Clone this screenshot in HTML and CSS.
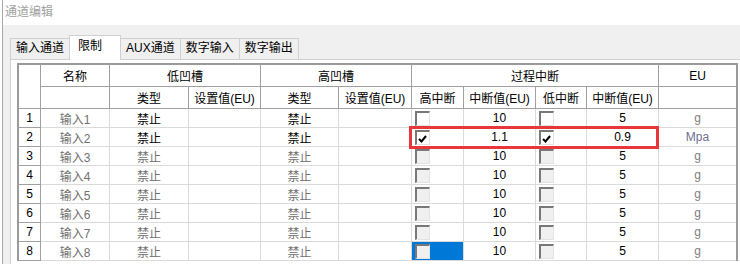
FILE: index.html
```html
<!DOCTYPE html>
<html lang="zh-CN">
<head>
  <meta charset="UTF-8">
  <meta name="viewport" content="width=device-width, initial-scale=1.0">
  <title>通道编辑</title>
  <link rel="stylesheet" href="styles.css">
</head>
<body>
  <div class="window">
    <div class="title">通道编辑</div>
    <div class="client">
      <div class="tabs">
        <div class="tab">输入通道</div>
        <div class="tab active">限制</div>
        <div class="tab">AUX通道</div>
        <div class="tab">数字输入</div>
        <div class="tab">数字输出</div>
      </div>
      <div class="panel">
        <div class="grid">
          <!-- header -->
          <div class="hd corner"></div>
          <div class="hd">名称</div>
          <div class="hd span2">低凹槽</div>
          <div class="hd span2">高凹槽</div>
          <div class="hd span4">过程中断</div>
          <div class="hd last">EU</div>
          <div class="hd"></div>
          <div class="hd">类型</div>
          <div class="hd">设置值(EU)</div>
          <div class="hd">类型</div>
          <div class="hd">设置值(EU)</div>
          <div class="hd">高中断</div>
          <div class="hd">中断值(EU)</div>
          <div class="hd">低中断</div>
          <div class="hd">中断值(EU)</div>
          <div class="hd last"></div>

          <!-- rows -->
          <div class="row">
            <div class="num">1</div>
            <div class="cell name">输入1</div>
            <div class="cell type">禁止</div>
            <div class="cell"></div>
            <div class="cell type">禁止</div>
            <div class="cell"></div>
            <div class="cell chk-cell"><span class="chk"></span></div>
            <div class="cell">10</div>
            <div class="cell chk-cell"><span class="chk"></span></div>
            <div class="cell">5</div>
            <div class="cell eu">g</div>
          </div>
          <div class="row">
            <div class="num">2</div>
            <div class="cell name">输入2</div>
            <div class="cell type">禁止</div>
            <div class="cell"></div>
            <div class="cell type">禁止</div>
            <div class="cell"></div>
            <div class="cell chk-cell"><span class="chk"><svg viewBox="0 0 9 8" width="9" height="8"><path d="M1 4 L3.5 6.5 L8 1"/></svg></span></div>
            <div class="cell">1.1</div>
            <div class="cell chk-cell"><span class="chk"><svg viewBox="0 0 9 8" width="9" height="8"><path d="M1 4 L3.5 6.5 L8 1"/></svg></span></div>
            <div class="cell">0.9</div>
            <div class="cell eu mpa">Mpa</div>
          </div>
          <div class="row off">
            <div class="num">3</div>
            <div class="cell name">输入3</div>
            <div class="cell type">禁止</div>
            <div class="cell"></div>
            <div class="cell type">禁止</div>
            <div class="cell"></div>
            <div class="cell chk-cell"><span class="chk"></span></div>
            <div class="cell">10</div>
            <div class="cell chk-cell"><span class="chk"></span></div>
            <div class="cell">5</div>
            <div class="cell eu">g</div>
          </div>
          <div class="row off">
            <div class="num">4</div>
            <div class="cell name">输入4</div>
            <div class="cell type">禁止</div>
            <div class="cell"></div>
            <div class="cell type">禁止</div>
            <div class="cell"></div>
            <div class="cell chk-cell"><span class="chk"></span></div>
            <div class="cell">10</div>
            <div class="cell chk-cell"><span class="chk"></span></div>
            <div class="cell">5</div>
            <div class="cell eu">g</div>
          </div>
          <div class="row off">
            <div class="num">5</div>
            <div class="cell name">输入5</div>
            <div class="cell type">禁止</div>
            <div class="cell"></div>
            <div class="cell type">禁止</div>
            <div class="cell"></div>
            <div class="cell chk-cell"><span class="chk"></span></div>
            <div class="cell">10</div>
            <div class="cell chk-cell"><span class="chk"></span></div>
            <div class="cell">5</div>
            <div class="cell eu">g</div>
          </div>
          <div class="row off">
            <div class="num">6</div>
            <div class="cell name">输入6</div>
            <div class="cell type">禁止</div>
            <div class="cell"></div>
            <div class="cell type">禁止</div>
            <div class="cell"></div>
            <div class="cell chk-cell"><span class="chk"></span></div>
            <div class="cell">10</div>
            <div class="cell chk-cell"><span class="chk"></span></div>
            <div class="cell">5</div>
            <div class="cell eu">g</div>
          </div>
          <div class="row off">
            <div class="num">7</div>
            <div class="cell name">输入7</div>
            <div class="cell type">禁止</div>
            <div class="cell"></div>
            <div class="cell type">禁止</div>
            <div class="cell"></div>
            <div class="cell chk-cell"><span class="chk"></span></div>
            <div class="cell">10</div>
            <div class="cell chk-cell"><span class="chk"></span></div>
            <div class="cell">5</div>
            <div class="cell eu">g</div>
          </div>
          <div class="row off">
            <div class="num">8</div>
            <div class="cell name">输入8</div>
            <div class="cell type">禁止</div>
            <div class="cell"></div>
            <div class="cell type">禁止</div>
            <div class="cell"></div>
            <div class="cell chk-cell sel"><span class="chk"></span></div>
            <div class="cell">10</div>
            <div class="cell chk-cell"><span class="chk"></span></div>
            <div class="cell">5</div>
            <div class="cell eu">g</div>
          </div>

          <div class="mark"></div>
        </div>
      </div>
    </div>
  </div>
</body>
</html>
```

FILE: styles.css
```css
* {
  box-sizing: border-box;
}
body {
  margin: 0;
  background: #fff;
  font-family: "Liberation Sans", "Noto Sans CJK SC", sans-serif;
  font-size: 12px;
  color: #000;
}
.window {
  height: 264px;
  margin-left: 2px;
  border-left: 1px solid #a9a9a9;
  overflow: hidden;
}
.title {
  height: 25px;
  line-height: 25px;
  padding-left: 2px;
  color: #a0a0a0;
  background: #fff;
}
.client {
  height: 239px;
  background: #f0f0f0;
  padding: 10px 0 0 7px;
}
.tabs {
  display: flex;
  align-items: flex-end;
  height: 24px;
}
.tab {
  height: 21px;
  line-height: 18px;
  padding: 0 5px;
  margin-left: -1px;
  border: 1px solid #d0d0d0;
  border-bottom: none;
  background: #f0f0f0;
  white-space: nowrap;
  text-align: center;
}
.tab:first-child {
  margin-left: 0;
}
.tab.active {
  position: relative;
  z-index: 1;
  height: 25px;
  margin-bottom: -1px;
  line-height: 21px;
  padding: 0 18px 0 8px;
  background: #fff;
}
.panel {
  width: 800px;
  height: 300px;
  border: 1px solid #d0d0d0;
  background: #fff;
  padding: 3px 0 0 6px;
}
.grid {
  position: relative;
  display: grid;
  width: 721px;
  grid-template-columns: 22px 69px 79px 72px 78px 73px 52px 72px 51px 72px 77px;
  grid-template-rows: 22px 22px repeat(8, 19px);
  border: 2px solid #9a9a9a;
  border-bottom: none;
}
.hd,
.num,
.cell {
  display: flex;
  align-items: center;
  justify-content: center;
  white-space: nowrap;
  border-right: 1px solid #a0a0a0;
  border-bottom: 1px solid #a0a0a0;
}
.hd.last,
.cell.eu {
  border-right: none;
}
.corner {
  grid-row: span 2;
}
.span2 {
  grid-column: span 2;
}
.span4 {
  grid-column: span 4;
}
.row {
  display: contents;
}
.cell {
  border-color: #dadada;
}
.name {
  color: #707070;
}
.off .type {
  color: #707070;
}
.eu {
  color: #808080;
}
.mpa {
  color: #6e6e92;
}
.chk-cell {
  justify-content: flex-start;
  padding-left: 3px;
}
.sel {
  background: #0078d7;
}
.chk {
  display: block;
  width: 15px;
  height: 15px;
  border-style: solid;
  border-width: 2px 1px 1px 2px;
  border-color: #787878 #e3e3e3 #e3e3e3 #787878;
  background: #fff;
}
.off .chk {
  background: #f0f0f0;
}
.chk svg {
  display: block;
  margin: 3px 0 0 1px;
  fill: none;
  stroke: #000;
  stroke-width: 2;
}
.mark {
  position: absolute;
  left: 390px;
  top: 61px;
  width: 250px;
  height: 23px;
  border: 3px solid #e8373b;
}
```
